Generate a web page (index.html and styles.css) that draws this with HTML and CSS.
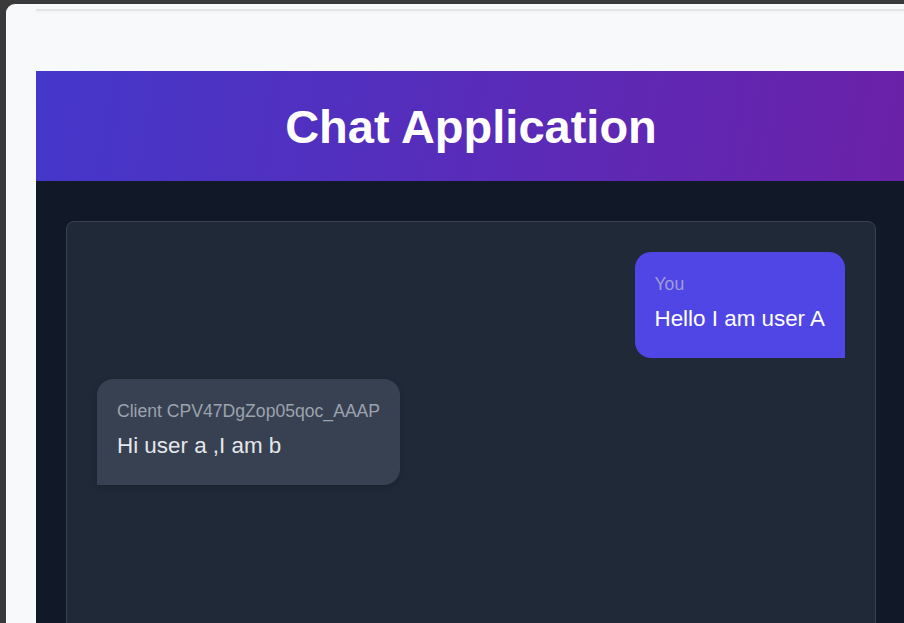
FILE: index.html
```html
<!DOCTYPE html>
<html lang="en">
<head>
<meta charset="utf-8">
<title>Chat Application</title>
<link rel="stylesheet" href="styles.css">
</head>
<body>
<div class="window">
  <div class="topline"></div>
  <div class="app">
    <header class="app-header">
      <h1>Chat Application</h1>
    </header>
    <main class="app-body">
      <section class="chat-box">
        <div class="msg msg-own">
          <div class="msg-label">You</div>
          <div class="msg-text">Hello I am user A</div>
        </div>
        <div class="msg msg-other">
          <div class="msg-label">Client CPV47DgZop05qoc_AAAP</div>
          <div class="msg-text">Hi user a ,I am b</div>
        </div>
      </section>
    </main>
  </div>
</div>
</body>
</html>
```

FILE: styles.css
```css
html, body {
  margin: 0;
  padding: 0;
  height: 100%;
  overflow: hidden;
}
body {
  background: #3a3a3a;
  font-family: "Liberation Sans", Arial, sans-serif;
}
.window {
  margin: 4px 0 0 6px;
  height: 700px;
  background: #f8f9fa;
  border-top-left-radius: 9px;
  border-left: 1px solid #ffffff;
  padding-top: 5px;
  box-sizing: border-box;
}
.topline {
  margin-left: 29px;
  height: 2px;
  background: #e3e4e6;
  box-shadow: 0 2px 2px rgba(0, 0, 0, 0.03);
}
.app {
  margin: 60px 0 0 29px;
  width: 870px;
}
.app-header {
  height: 110px;
  background: linear-gradient(100deg, #4437ca 0%, #5a2bb8 55%, #6b21a8 100%);
  display: flex;
  align-items: center;
  justify-content: center;
}
.app-header h1 {
  margin: 0;
  color: #ffffff;
  font-size: 47px;
  font-weight: bold;
  letter-spacing: 0;
}
.app-body {
  background: #111827;
  padding: 40px 30px 0;
  height: 600px;
  box-sizing: border-box;
}
.chat-box {
  background: #1f2937;
  border: 1px solid #374151;
  border-radius: 8px;
  padding: 30px;
  height: 700px;
  display: flex;
  flex-direction: column;
  gap: 21px;
}
.msg {
  padding: 22px 20px 26px;
  border-radius: 16px;
  max-width: 70%;
}
.msg-own {
  align-self: flex-end;
  background: #4f46e5;
  border-bottom-right-radius: 0;
  color: #ffffff;
}
.msg-other {
  align-self: flex-start;
  background: #374151;
  border-bottom-left-radius: 0;
  color: #e5e7eb;
  box-shadow: 0 2px 6px rgba(0, 0, 0, 0.15);
}
.msg-label {
  font-size: 17.6px;
  line-height: 20px;
  color: #9ca3af;
  margin-bottom: 12px;
}
.msg-own .msg-label {
  color: #a09dd6;
}
.msg-text {
  font-size: 22.4px;
  line-height: 26px;
}
```
